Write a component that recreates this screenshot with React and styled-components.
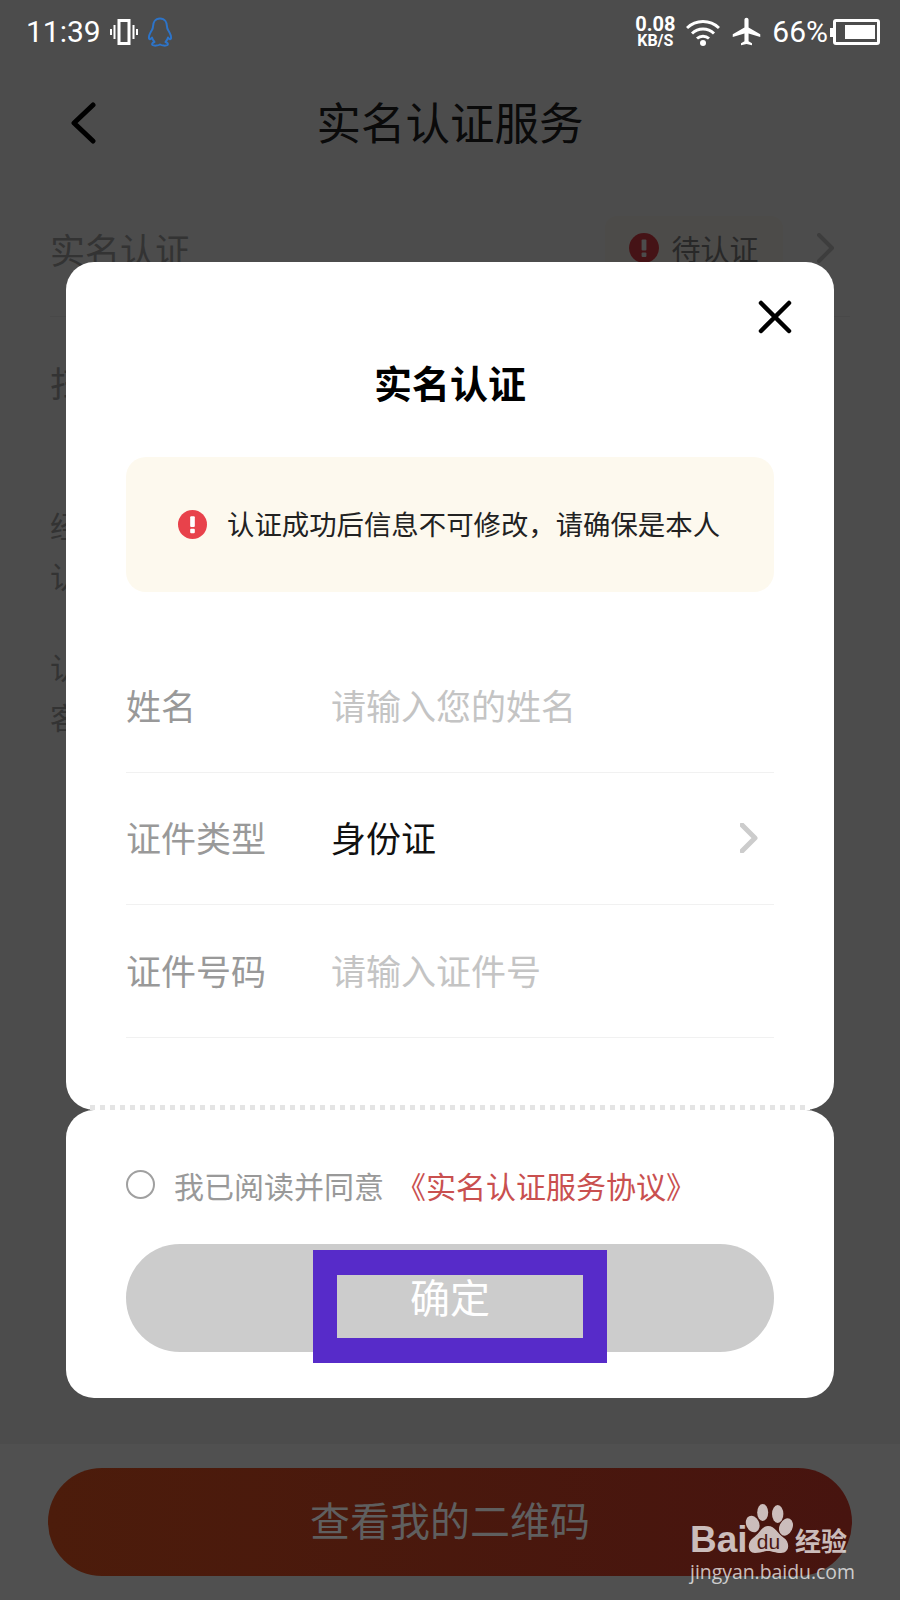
import React from "react";
import styled, { createGlobalStyle } from "styled-components";
import { MdAirplanemodeActive } from "react-icons/md";

const GlobalStyle = createGlobalStyle`
  html, body {
    margin: 0;
    padding: 0;
    background: #fff;
  }
  * {
    box-sizing: border-box;
  }
`;

const cjk = `"Noto Sans CJK SC", "Noto Sans", sans-serif`;

const Page = styled.div`
  position: relative;
  width: 900px;
  height: 1600px;
  overflow: hidden;
  display: flex;
  flex-direction: column;
  background: #fff;
  font-family: ${cjk};
  color: #333;
`;

/* status bar sits above the dim layer */
const StatusBar = styled.div`
  position: relative;
  z-index: 3;
  height: 60px;
  flex: none;
  display: flex;
  align-items: center;
  justify-content: space-between;
  padding: 4px 20px 0 26px;
  color: #fff;
  font-family: Roboto, sans-serif;
`;
const StatusGroup = styled.div`
  display: flex;
  align-items: center;
  gap: ${(p) => p.$gap || 10}px;
`;
const StatusText = styled.span`
  font-size: 30px;
  line-height: 34px;
`;
const Percent = styled(StatusText)`
  margin-left: -1px;
`;
const Speed = styled.div`
  display: flex;
  flex-direction: column;
  align-items: center;
  font-weight: 700;
  width: 42px;
  font-size: 20px;
  line-height: 17px;
  small {
    font-size: 16px;
    line-height: 15px;
    font-weight: 700;
  }
`;
const Battery = styled.div`
  position: relative;
  width: 47px;
  height: 26px;
  margin-left: -5px;
  border: 3px solid #fff;
  border-radius: 3px;
  display: flex;
  justify-content: flex-end;
  padding: 3px 2px;
  &::before {
    content: "";
    position: absolute;
    left: -6px;
    top: 6px;
    width: 3px;
    height: 9px;
    background: #fff;
  }
  &::after {
    content: "";
    width: 30px;
    background: #fff;
  }
`;

const Nav = styled.div`
  flex: none;
  height: 124px;
  display: grid;
  grid-template-columns: 1fr auto 1fr;
  align-items: center;
`;
const BackIcon = styled.svg`
  margin-left: 70px;
  margin-top: 2px;
`;
const NavTitle = styled.h1`
  margin: 0 0 4px;
  font-size: 44.5px;
  font-weight: 400;
  color: #222;
`;

const InfoRow = styled.div`
  flex: none;
  height: 133px;
  margin: 0 50px;
  padding-bottom: 4px;
  border-bottom: 1px solid ${(p) => (p.$plain ? "transparent" : "#f2f2f2")};
  display: flex;
  align-items: center;
  justify-content: space-between;
  font-size: 35px;
  color: #aaa;
`;
const RowEnd = styled.div`
  display: flex;
  align-items: center;
  gap: 34px;
  padding-right: 15px;
`;
const Badge = styled.div`
  width: 178px;
  height: 64px;
  border-radius: 12px;
  background: #fffbf4;
  display: flex;
  align-items: center;
  justify-content: center;
  gap: 12px;
  font-size: 29px;
  color: #888;
`;
const Paragraph = styled.p`
  margin: ${(p) => p.$top}px 50px 0;
  font-size: 30px;
  line-height: 50px;
  color: #aaa;
  white-space: pre-line;
`;

/* bottom bar keeps its own dimmed colours, it reads lighter than the dim layer */
const FooterBar = styled.div`
  position: relative;
  z-index: 3;
  margin-top: auto;
  flex: none;
  background: #505050;
  border-top: 1px solid #4c4c4c;
  padding: 24px 48px;
`;
const QrButton = styled.div`
  height: 108px;
  padding-bottom: 6px;
  border-radius: 54px;
  background: linear-gradient(90deg, #4c1c0b, #47140f);
  display: flex;
  align-items: center;
  justify-content: center;
  font-size: 40px;
  color: #5f5f5f;
`;

const Dim = styled.div`
  position: absolute;
  inset: 0;
  z-index: 2;
  background: rgba(0, 0, 0, 0.7);
  padding-top: 262px;
`;
const Modal = styled.div`
  width: 768px;
  margin: 0 auto;
`;
const TopCard = styled.div`
  position: relative;
  height: 848px;
  border-radius: 28px;
  background: #fff;
  padding: 95px 60px 0;
  display: flex;
  flex-direction: column;
`;
const Close = styled.svg`
  position: absolute;
  top: 38px;
  right: 42px;
`;
const ModalTitle = styled.h2`
  margin: 0 0 2px;
  height: 50px;
  font-size: 38px;
  line-height: 50px;
  font-weight: 700;
  text-align: center;
  color: #000;
`;
const Notice = styled.div`
  margin-top: 48px;
  height: 135px;
  border-radius: 20px;
  background: #fdf9ee;
  display: flex;
  align-items: center;
  padding-left: 52px;
  gap: 20px;
  font-size: 27.4px;
  color: #222;
  white-space: nowrap;
`;
const NoticeText = styled.span`
  margin-bottom: 4px;
`;
const Form = styled.div`
  margin-top: 48px;
`;
const FormRow = styled.div`
  height: 132.5px;
  border-bottom: 1px solid #f1f1f1;
  display: flex;
  align-items: center;
  justify-content: space-between;
  padding-right: 16px;
  font-size: 35px;
`;
const FormLabel = styled.span`
  width: 205px;
  flex: none;
  margin-bottom: 3px;
  color: #999;
`;
const FormValue = styled.span`
  flex: 1;
  margin-bottom: 3px;
  color: ${(p) => (p.$placeholder ? "#c4c4c4" : "#111")};
`;
const Tear = styled.div`
  position: absolute;
  left: 24px;
  right: 24px;
  bottom: 0;
  height: 5px;
  background: repeating-linear-gradient(90deg, #e4e4e4 0 5px, #fff 5px 10px);
`;

const BottomCard = styled.div`
  height: 288px;
  border-radius: 28px;
  background: #fff;
  padding: 56px 60px 46px;
`;
const Agreement = styled.div`
  height: 40px;
  padding-bottom: 3px;
  display: flex;
  align-items: center;
  font-size: 30px;
  color: #999;
  white-space: nowrap;
`;
const Radio = styled.span`
  width: 29px;
  height: 29px;
  margin-right: 19px;
  border: 2px solid #a0a0a0;
  border-radius: 50%;
`;
const AgreementLink = styled.span`
  margin-left: 12px;
  color: #c9504f;
`;
const ConfirmButton = styled.div`
  position: relative;
  margin-top: 38px;
  height: 108px;
  padding-bottom: 4px;
  border-radius: 54px;
  background: #cccccc;
  display: flex;
  align-items: center;
  justify-content: center;
  font-size: 40px;
  color: #fff;
`;
/* annotation frame drawn over the button */
const Highlight = styled.div`
  position: absolute;
  left: 187px;
  top: 6px;
  width: 294px;
  height: 113px;
  border: solid #572bc9;
  border-width: 25px 24px;
`;

const Watermark = styled.div`
  position: absolute;
  z-index: 4;
  left: 690px;
  top: 1503px;
  width: 165px;
  color: rgba(255, 255, 255, 0.72);
`;
const LogoRow = styled.div`
  display: flex;
  align-items: flex-end;
  height: 52px;
`;
const LogoBai = styled.span`
  font-family: "Liberation Sans", sans-serif;
  font-size: 37px;
  font-weight: 700;
  line-height: 37px;
  margin-bottom: -3px;
  width: 55px;
`;
const LogoCn = styled.span`
  font-size: 26px;
  font-weight: 700;
  line-height: 30px;
`;
const LogoSite = styled.div`
  margin-top: 3px;
  font-family: "Open Sans", sans-serif;
  font-size: 19.4px;
  line-height: 28px;
  white-space: nowrap;
`;

const VibrateIcon = () => (
  <svg width="28" height="26" viewBox="0 0 28 26" fill="none" stroke="#fff">
    <rect x="9" y="1.5" width="10" height="23" strokeWidth="3" />
    <path d="M4.5 6v14M23.5 6v14M1 10v6M27 10v6" strokeWidth="2" />
  </svg>
);

const QqIcon = () => (
  <svg width="26" height="30" viewBox="0 0 26 30" fill="none" stroke="#2d74c9" strokeWidth="2" strokeLinejoin="round">
    <path d="M13 1.5C8 1.5 6 5.5 6 9.5C6 11 5.5 12 4.8 13.2C3 16 1.5 19 2 21.5C2.5 23 4 22 5 20.5C5.5 22.5 6.5 24 7.5 25C5.5 25.8 4.5 27 5.5 28C7 29 11 28.8 13 27.5C15 28.8 19 29 20.5 28C21.5 27 20.5 25.8 18.5 25C19.5 24 20.5 22.5 21 20.5C22 22 23.5 23 24 21.5C24.5 19 23 16 21.2 13.2C20.5 12 20 11 20 9.5C20 5.5 18 1.5 13 1.5Z" />
  </svg>
);

const WifiIcon = () => (
  <svg width="34" height="27" viewBox="0 0 34 27" fill="none" stroke="#fff" strokeWidth="3">
    <path d="M1 9A23 23 0 0 1 33 9M6 14.5A16 16 0 0 1 28 14.5M11 19.5A9 9 0 0 1 23 19.5" />
    <circle cx="17" cy="24" r="3" fill="#fff" stroke="none" />
  </svg>
);

const AlertIcon = ({ size }) => (
  <svg width={size} height={size} viewBox="0 0 30 30">
    <circle cx="15" cy="15" r="15" fill="#e8424b" />
    <rect x="12.6" y="6.5" width="4.8" height="11" rx="1" fill="#fff" />
    <rect x="12.6" y="19.5" width="4.8" height="4.5" rx="1" fill="#fff" />
  </svg>
);

const Chevron = ({ color, width = 18, height = 30, stroke = 4 }) => (
  <svg width={width} height={height} viewBox="0 0 18 30" fill="none">
    <path d="M2 2l13 13L2 28" stroke={color} strokeWidth={stroke} strokeLinecap="round" strokeLinejoin="round" />
  </svg>
);

const PawLogo = () => (
  <svg width="50" height="52" viewBox="0 0 50 52" fill="rgba(255,255,255,0.72)">
    <ellipse cx="7.7" cy="21" rx="6.5" ry="8.5" transform="rotate(-25 7.7 21)" />
    <ellipse cx="17.7" cy="9.5" rx="5.5" ry="8.5" />
    <ellipse cx="32.7" cy="11" rx="5.7" ry="9" />
    <ellipse cx="41" cy="24" rx="6.5" ry="9" transform="rotate(25 41 24)" />
    <path d="M23 23C30 23 33 31 39 35C45 39 45 50 36 50C30 50 27 48 23 48C19 48 16 50 10 50C2 50 2 39 8 35C14 31 17 23 23 23Z" />
    <text x="23.5" y="46" textAnchor="middle" fontFamily="Liberation Sans, sans-serif" fontSize="21" fill="#4a1712">
      du
    </text>
  </svg>
);

const App = () => {
  return (
    <Page>
      <GlobalStyle />

      <StatusBar>
        <StatusGroup $gap={9}>
          <StatusText>11:39</StatusText>
          <VibrateIcon />
          <QqIcon />
        </StatusGroup>
        <StatusGroup $gap={10}>
          <Speed>
            0.08
            <small>KB/S</small>
          </Speed>
          <WifiIcon />
          <MdAirplanemodeActive size={33} color="#fff" style={{ transform: "translateY(-1px)" }} />
          <Percent>66%</Percent>
          <Battery />
        </StatusGroup>
      </StatusBar>

      <Nav>
        <BackIcon width="26" height="42" viewBox="0 0 26 42" fill="none">
          <path d="M23 3L4 21l19 18" stroke="#000" strokeWidth="5" strokeLinecap="round" strokeLinejoin="round" />
        </BackIcon>
        <NavTitle>实名认证服务</NavTitle>
      </Nav>

      <InfoRow>
        <span>实名认证</span>
        <RowEnd>
          <Badge>
            <AlertIcon size={30} />
            待认证
          </Badge>
          <Chevron color="#ccc" />
        </RowEnd>
      </InfoRow>
      <InfoRow $plain>
        <span>扫码认证</span>
      </InfoRow>

      <Paragraph $top={50}>{"经实名认证后，账号信息\n认证通过后不可修改"}</Paragraph>
      <Paragraph $top={41}>{"认证遇到问题，请联系\n客服处理"}</Paragraph>

      <FooterBar>
        <QrButton>查看我的二维码</QrButton>
      </FooterBar>

      <Dim>
        <Modal>
          <TopCard>
            <Close width="34" height="34" viewBox="0 0 34 34" fill="none">
              <path d="M3 3l28 28M31 3L3 31" stroke="#000" strokeWidth="4.5" strokeLinecap="round" />
            </Close>
            <ModalTitle>实名认证</ModalTitle>
            <Notice>
              <AlertIcon size={29} />
              <NoticeText>认证成功后信息不可修改，请确保是本人</NoticeText>
            </Notice>
            <Form>
              <FormRow>
                <FormLabel>姓名</FormLabel>
                <FormValue $placeholder>请输入您的姓名</FormValue>
              </FormRow>
              <FormRow>
                <FormLabel>证件类型</FormLabel>
                <FormValue>身份证</FormValue>
                <Chevron color="#cccccc" stroke={5} />
              </FormRow>
              <FormRow>
                <FormLabel>证件号码</FormLabel>
                <FormValue $placeholder>请输入证件号</FormValue>
              </FormRow>
            </Form>
            <Tear />
          </TopCard>

          <BottomCard>
            <Agreement>
              <Radio />
              我已阅读并同意
              <AgreementLink>《实名认证服务协议》</AgreementLink>
            </Agreement>
            <ConfirmButton>
              确定
              <Highlight />
            </ConfirmButton>
          </BottomCard>
        </Modal>
      </Dim>

      <Watermark>
        <LogoRow>
          <LogoBai>Bai</LogoBai>
          <PawLogo />
          <LogoCn>经验</LogoCn>
        </LogoRow>
        <LogoSite>jingyan.baidu.com</LogoSite>
      </Watermark>
    </Page>
  );
};

export default App;
